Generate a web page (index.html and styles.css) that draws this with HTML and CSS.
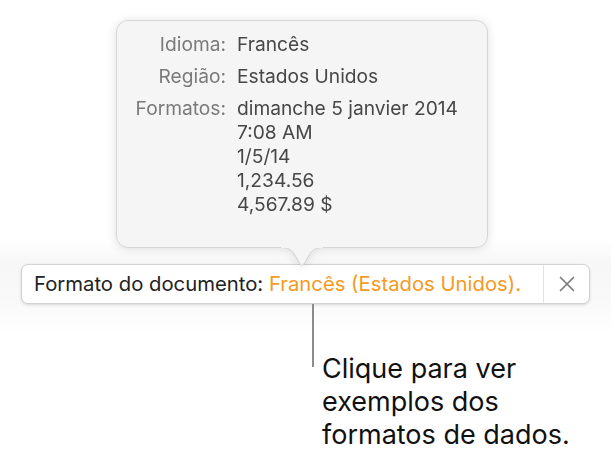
FILE: index.html
```html
<!DOCTYPE html>
<html lang="pt">
<head>
    <meta charset="UTF-8">
    <meta name="viewport" content="width=device-width, initial-scale=1.0">
    <title>Formato do documento</title>
    <link rel="stylesheet" href="styles.css">
</head>
<body>
    <div class="stage">
        <div class="popover">
            <div class="details">
                <div class="label">Idioma:</div>
                <div class="value">Francês</div>

                <div class="label">Região:</div>
                <div class="value">Estados Unidos</div>

                <div class="label">Formatos:</div>
                <div class="value">
                    dimanche 5 janvier 2014<br>
                    7:08 AM<br>
                    1/5/14<br>
                    1,234.56<br>
                    4,567.89 $
                </div>
            </div>

            <svg class="popover-arrow" width="44" height="21" viewBox="0 0 44 21">
                <path d="M0,0.5 C8,0.5 11,2.5 14,6.5 L20,17 Q22,20 24,17 L30,6.5 C33,2.5 36,0.5 44,0.5" fill="#f5f5f5" stroke="#d2d2d2" stroke-width="1"/>
                <rect x="1" y="-1" width="42" height="2" fill="#f5f5f5"/>
            </svg>
        </div>

        <div class="format-bar">
            <div class="format-text">
                Formato do documento: <span class="locale">Francês (Estados Unidos).</span>
            </div>
            <div class="close-cell">
                <svg width="16" height="16" viewBox="0 0 16 16">
                    <path d="M1.5,1.5 L14.5,14.5 M14.5,1.5 L1.5,14.5" stroke="#7b7b7b" stroke-width="1.7" stroke-linecap="round"/>
                </svg>
            </div>
        </div>

        <div class="callout">
            <div class="callout-line"></div>
            <p class="callout-text">Clique para ver<br>exemplos dos<br>formatos de dados.</p>
        </div>
    </div>
</body>
</html>
```

FILE: styles.css
```css
html, body {
    margin: 0;
    padding: 0;
}

body {
    width: 611px;
    height: 465px;
    overflow: hidden;
    font-family: Inter, 'Liberation Sans', sans-serif;
    background: linear-gradient(to bottom, #fff 0, #fff 240px, #f7f7f7 262px, #f9f9f9 300px, #fff 335px);
}

.stage {
    padding-top: 20px;
}

.popover {
    position: relative;
    margin-left: 116px;
    width: 372px;
    height: 228px;
    box-sizing: border-box;
    padding-top: 11px;
    background-color: #f5f5f5;
    border: 1px solid #d6d6d6;
    border-radius: 12px;
    filter: drop-shadow(0 1px 5px rgba(0, 0, 0, 0.12));
}

.details {
    display: grid;
    grid-template-columns: 109px auto;
    column-gap: 11px;
    row-gap: 8px;
    font-size: 19.2px;
    line-height: 24px;
}

.label {
    text-align: right;
    color: #7a7a7a;
}

.value {
    color: #474747;
}

.popover-arrow {
    position: absolute;
    top: 100%;
    left: 163px;
    overflow: visible;
}

.format-bar {
    display: flex;
    margin: 16px 0 0 21px;
    width: 569px;
    height: 40px;
    box-sizing: border-box;
    background-color: #fff;
    border: 1px solid #d3d3d3;
    border-radius: 7px;
    box-shadow: 0 1px 3px rgba(0, 0, 0, 0.14);
}

.format-text {
    flex: 1;
    padding-left: 12px;
    font-size: 20.3px;
    line-height: 38px;
    color: #222;
    white-space: nowrap;
}

.locale {
    color: #f59a23;
}

.close-cell {
    width: 45px;
    display: flex;
    align-items: center;
    justify-content: center;
    border-left: 1px solid #e3e3e3;
}

.callout {
    display: flex;
    gap: 8px;
    margin-left: 312px;
}

.callout-line {
    width: 2px;
    height: 63px;
    background-color: #8c8c8c;
}

.callout-text {
    margin: 48px 0 0;
    font-size: 27px;
    line-height: 33px;
    color: #111;
}
```
